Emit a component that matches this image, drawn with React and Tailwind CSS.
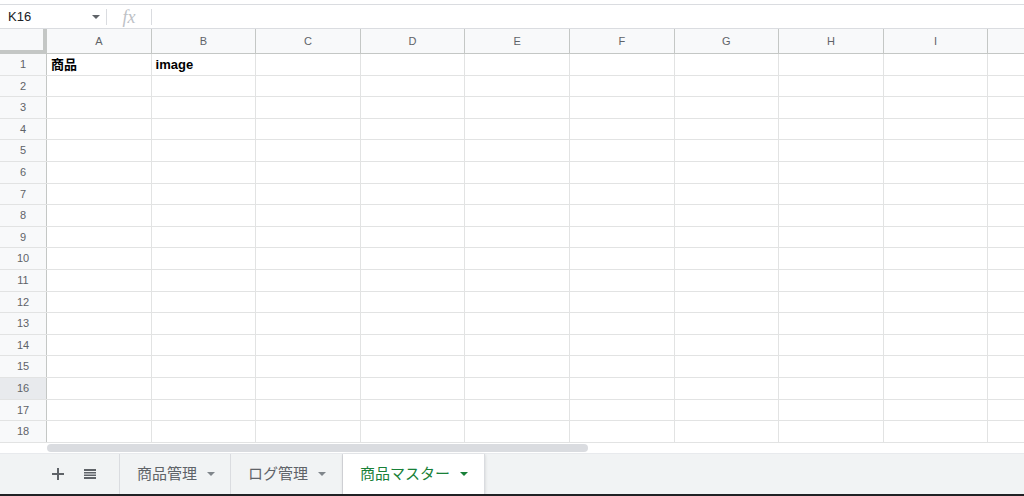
import React from 'react';

const COLS = ['A', 'B', 'C', 'D', 'E', 'F', 'G', 'H', 'I', 'J'];
const ROWS = Array.from({ length: 18 }, (_, i) => i + 1);

const font = { fontFamily: '"Liberation Sans", Arial, "Noto Sans CJK JP", sans-serif' };

const Caret = ({ className = '' }) => (
  <svg width="8" height="4" viewBox="0 0 8 4" className={className}>
    <path d="M0 0h8L4 4z" fill="currentColor" />
  </svg>
);

const Tab = ({ label, active, width }) => (
  <div
    className={`h-full flex items-center gap-[10px] pl-[17px] border-r border-[#dadce0] ${width} ${
      active ? 'bg-white text-[#188038] shadow-[0_1px_3px_rgba(0,0,0,0.15)]' : 'text-[#5f6368]'
    }`}
  >
    <span className="text-[15px]">{label}</span>
    <Caret className={active ? 'text-[#188038]' : 'text-[#80868b]'} />
  </div>
);

export default function App() {
  return (
    <div className="w-[1024px] h-[496px] bg-white overflow-hidden flex flex-col" style={font}>
      {/* formula bar */}
      <div className="mt-[4px] h-[25px] border-t border-b border-[#dadce0] flex items-center shrink-0">
        <div className="w-[106px] flex items-center justify-between pl-[8px] pr-[6px] text-[13px] text-[#202124]">
          <span>K16</span>
          <Caret className="text-[#5f6368]" />
        </div>
        <div className="h-[16px] border-l border-[#dadce0]" />
        <span
          className="w-[44px] text-center text-[18px] text-[#bdc1c6] italic leading-none"
          style={{ fontFamily: '"Liberation Serif", serif' }}
        >
          fx
        </span>
        <div className="h-[16px] border-l border-[#dadce0]" />
      </div>

      {/* grid */}
      <div className="flex flex-col shrink-0">
        <div className="flex h-[25px] bg-[#f8f9fa] border-b border-[#c4c7c5]">
          <div className="w-[47px] shrink-0 border-r-[4px] border-b-[3px] border-[#c4c7c5] bg-[#f8f9fa]" />
          {COLS.map((c) => (
            <div
              key={c}
              className="w-[104.6px] shrink-0 border-r border-[#c4c7c5] flex items-center justify-center text-[11px] text-[#5f6368]"
            >
              {c !== 'J' ? c : ''}
            </div>
          ))}
        </div>
        {ROWS.map((r) => (
          <div key={r} className="flex h-[21.6px] border-b border-[#e2e3e3]">
            <div
              className={`w-[47px] shrink-0 border-r border-[#c4c7c5] flex items-center justify-center text-[11px] text-[#5f6368] ${
                r === 16 ? 'bg-[#e8eaed]' : 'bg-[#f8f9fa]'
              }`}
            >
              {r}
            </div>
            {COLS.map((c) => (
              <div
                key={c}
                className="w-[104.6px] shrink-0 border-r border-[#e2e3e3] flex items-center pt-[1px] px-[4px] text-[13px] font-bold text-black"
              >
                {r === 1 && c === 'A' ? '商品' : r === 1 && c === 'B' ? 'image' : ''}
              </div>
            ))}
          </div>
        ))}
      </div>

      {/* horizontal scrollbar */}
      <div className="h-[10px] flex items-center shrink-0">
        <div className="w-[47px] h-full bg-white" />
        <div className="w-[541px] h-[8px] rounded-full bg-[#dadce0]" />
      </div>

      {/* sheet tabs */}
      <div className="flex-1 bg-[#f1f3f4] border-t border-[#e8eaed] flex items-stretch">
        <div className="w-[120px] flex items-center gap-[20px] pl-[52px] border-r border-[#dadce0] text-[#5f6368]">
          <svg width="12" height="12" viewBox="0 0 12 12">
            <path d="M5 0h2v5h5v2H7v5H5V7H0V5h5z" fill="currentColor" />
          </svg>
          <svg width="12" height="12" viewBox="0 0 12 12">
            <path d="M0 1h12v2H0zM0 4h12v1.5H0zM0 6.5h12V8H0zM0 9h12v2H0z" fill="currentColor" />
          </svg>
        </div>
        <Tab label="商品管理" width="w-[111px]" />
        <Tab label="ログ管理" width="w-[112px]" />
        <Tab label="商品マスター" width="w-[142px]" active />
      </div>
      <div className="h-[2px] bg-[#202124] shrink-0" />
    </div>
  );
}
